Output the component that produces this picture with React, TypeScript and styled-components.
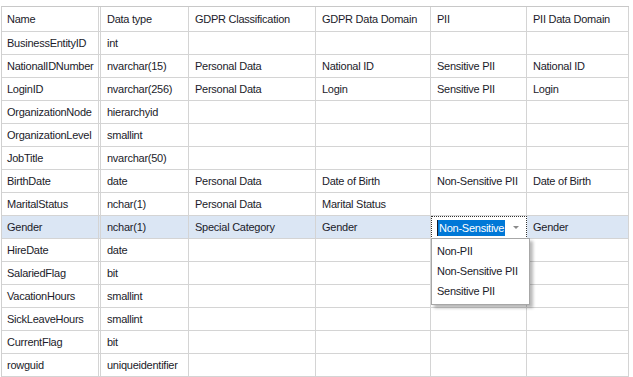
import styled, { createGlobalStyle } from "styled-components"

const GlobalStyle = createGlobalStyle`
  body {
    margin: 0;
    background: #ffffff;
    font-family: "Liberation Sans", Arial, sans-serif;
  }
`

const Page = styled.div`
  padding: 6px 0 0 1px;
`

const Grid = styled.div`
  display: grid;
  grid-template-columns: 99px 88px 127px 115px 96px 102px;
  width: 628px;
  border-top: 1px solid #c8c8c8;
  border-left: 1px solid #d0d0d0;
  box-sizing: border-box;
  font-size: 11px;
  letter-spacing: -0.25px;
  color: #1b1b2a;
`

const Cell = styled.div<{ $head?: boolean; $selected?: boolean; $frozen?: boolean }>`
  position: relative;
  height: ${(p) => (p.$head ? "24px" : "22px")};
  line-height: ${(p) => (p.$head ? "24px" : "22px")};
  padding-left: ${(p) => (p.$frozen ? "5px" : "6px")};
  border-right: ${(p) => (p.$frozen ? "3px double #d4d4d4" : "1px solid #d4d4d4")};
  border-bottom: 1px solid #d4d4d4;
  background: ${(p) => (p.$selected ? "#dbe6f4" : "#ffffff")};
  white-space: nowrap;
`

// in-place combo editor that sits over the PII cell
const Editor = styled.div`
  position: absolute;
  inset: 0 -1px -1px 0;
  border: 1px dotted #333333;
  background: #ffffff;
  display: flex;
  align-items: center;
  justify-content: space-between;
  padding: 0 7px 0 5px;
  z-index: 2;
`

const Highlight = styled.span`
  background: #0078d7;
  color: #ffffff;
  line-height: 16px;
  padding: 0 1px;
  border-left: 1px solid #1b1b2a;
`

const Arrow = styled.span`
  width: 0;
  height: 0;
  border-left: 3px solid transparent;
  border-right: 3px solid transparent;
  border-top: 3px solid #8a8a8a;
`

const Popup = styled.div`
  position: absolute;
  left: 0;
  top: 22px;
  width: 97px;
  padding: 2px 0 3px;
  display: flex;
  flex-direction: column;
  background: #ffffff;
  border: 1px solid #a7a7a7;
  box-shadow: 3px 3px 3px rgba(0, 0, 0, 0.28);
  z-index: 3;
`

const Option = styled.div`
  height: 20px;
  line-height: 20px;
  padding-left: 5px;
  color: #1b1b2a;
`

type Row = [string, string, string, string, string, string]

const header: Row = ["Name", "Data type", "GDPR Classification", "GDPR Data Domain", "PII", "PII Data Domain"]

const rows: Row[] = [
  ["BusinessEntityID", "int", "", "", "", ""],
  ["NationalIDNumber", "nvarchar(15)", "Personal Data", "National ID", "Sensitive PII", "National ID"],
  ["LoginID", "nvarchar(256)", "Personal Data", "Login", "Sensitive PII", "Login"],
  ["OrganizationNode", "hierarchyid", "", "", "", ""],
  ["OrganizationLevel", "smallint", "", "", "", ""],
  ["JobTitle", "nvarchar(50)", "", "", "", ""],
  ["BirthDate", "date", "Personal Data", "Date of Birth", "Non-Sensitive PII", "Date of Birth"],
  ["MaritalStatus", "nchar(1)", "Personal Data", "Marital Status", "", ""],
  ["Gender", "nchar(1)", "Special Category", "Gender", "", "Gender"],
  ["HireDate", "date", "", "", "", ""],
  ["SalariedFlag", "bit", "", "", "", ""],
  ["VacationHours", "smallint", "", "", "", ""],
  ["SickLeaveHours", "smallint", "", "", "", ""],
  ["CurrentFlag", "bit", "", "", "", ""],
  ["rowguid", "uniqueidentifier", "", "", "", ""],
]

const editRow = 8
const editCol = 4
const options = ["Non-PII", "Non-Sensitive PII", "Sensitive PII"]

export default function App() {
  return (
    <Page>
      <GlobalStyle />
      <Grid>
        {header.map((h, c) => (
          <Cell key={"h" + c} $head $frozen={c === 0}>
            {h}
          </Cell>
        ))}
        {rows.map((row, r) =>
          row.map((v, c) => (
            <Cell key={r + "-" + c} $frozen={c === 0} $selected={r === editRow}>
              {r === editRow && c === editCol ? (
                <>
                  <Editor>
                    <Highlight>Non-Sensitive</Highlight>
                    <Arrow />
                  </Editor>
                  <Popup>
                    {options.map((o) => (
                      <Option key={o}>{o}</Option>
                    ))}
                  </Popup>
                </>
              ) : (
                v
              )}
            </Cell>
          ))
        )}
      </Grid>
    </Page>
  )
}
